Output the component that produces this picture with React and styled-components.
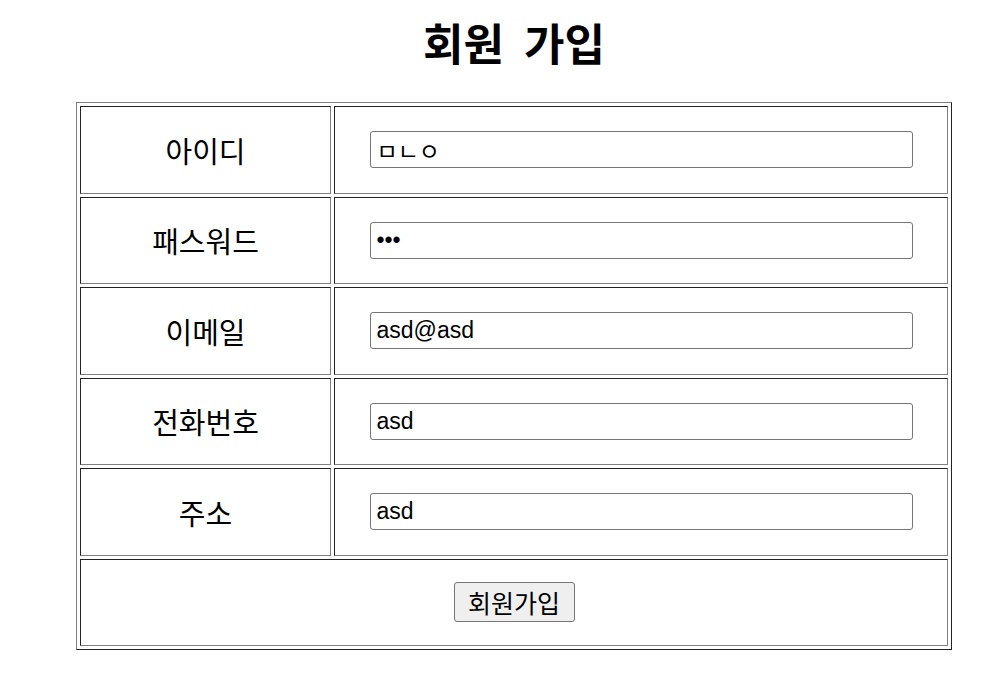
import styled, { createGlobalStyle } from "styled-components"

const GlobalStyle = createGlobalStyle`
  html, body {
    margin: 0;
    padding: 0;
    background: #ffffff;
  }
  body {
    font-family: "Liberation Sans", "Noto Sans CJK KR", sans-serif;
    color: #000;
  }
`

const Page = styled.div`
  padding: 17px 0 0 76px;
  width: 876px;
`

const Title = styled.h1`
  margin: 0 0 35px 0;
  height: 50px;
  line-height: 50px;
  text-align: center;
  font-family: "Noto Sans CJK KR", sans-serif;
  font-size: 44px;
  font-weight: 700;
  word-spacing: 10px;
`

const Table = styled.table`
  width: 876px;
  table-layout: fixed;
  border-collapse: separate;
  border-spacing: 3px;
  border: 1px solid;
  border-color: #808080 #222222 #222222 #808080;
  box-sizing: border-box;
`

const Cell = styled.td`
  box-sizing: border-box;
  height: 87.5px;
  padding: 0;
  border: 1px solid;
  border-color: #222222 #808080 #808080 #222222;
  text-align: center;
  vertical-align: middle;
`

const Label = styled(Cell)`
  width: 251px;
  font-family: "Noto Sans CJK KR", sans-serif;
  font-size: 29px;
`

const Field = styled.input`
  box-sizing: border-box;
  width: 543px;
  height: 37px;
  margin: 0;
  padding: 0 6px;
  border: 1px solid #767676;
  border-radius: 3px;
  background: #fff;
  font-family: "Liberation Sans", "Noto Sans CJK KR", sans-serif;
  font-size: 23px;
  color: #000;
  vertical-align: middle;
`

const SubmitButton = styled.button`
  box-sizing: border-box;
  width: 121px;
  height: 40px;
  padding: 0;
  border: 1px solid #767676;
  border-radius: 3px;
  background: #efefef;
  font-family: "Noto Sans CJK KR", sans-serif;
  font-size: 25px;
  line-height: 1;
  color: #000;
  vertical-align: middle;
`

const rows = [
  { label: "아이디", type: "text", value: "ㅁㄴㅇ" },
  { label: "패스워드", type: "password", value: "asd" },
  { label: "이메일", type: "text", value: "asd@asd" },
  { label: "전화번호", type: "text", value: "asd" },
  { label: "주소", type: "text", value: "asd" },
]

export default function App() {
  return (
    <>
      <GlobalStyle />
      <Page>
        <Title>회원 가입</Title>
        <form onSubmit={(e) => e.preventDefault()}>
          <Table>
            <tbody>
              {rows.map((r) => (
                <tr key={r.label}>
                  <Label>{r.label}</Label>
                  <Cell>
                    <Field type={r.type} defaultValue={r.value} />
                  </Cell>
                </tr>
              ))}
              <tr>
                <Cell colSpan={2}>
                  <SubmitButton type="submit">회원가입</SubmitButton>
                </Cell>
              </tr>
            </tbody>
          </Table>
        </form>
      </Page>
    </>
  )
}
